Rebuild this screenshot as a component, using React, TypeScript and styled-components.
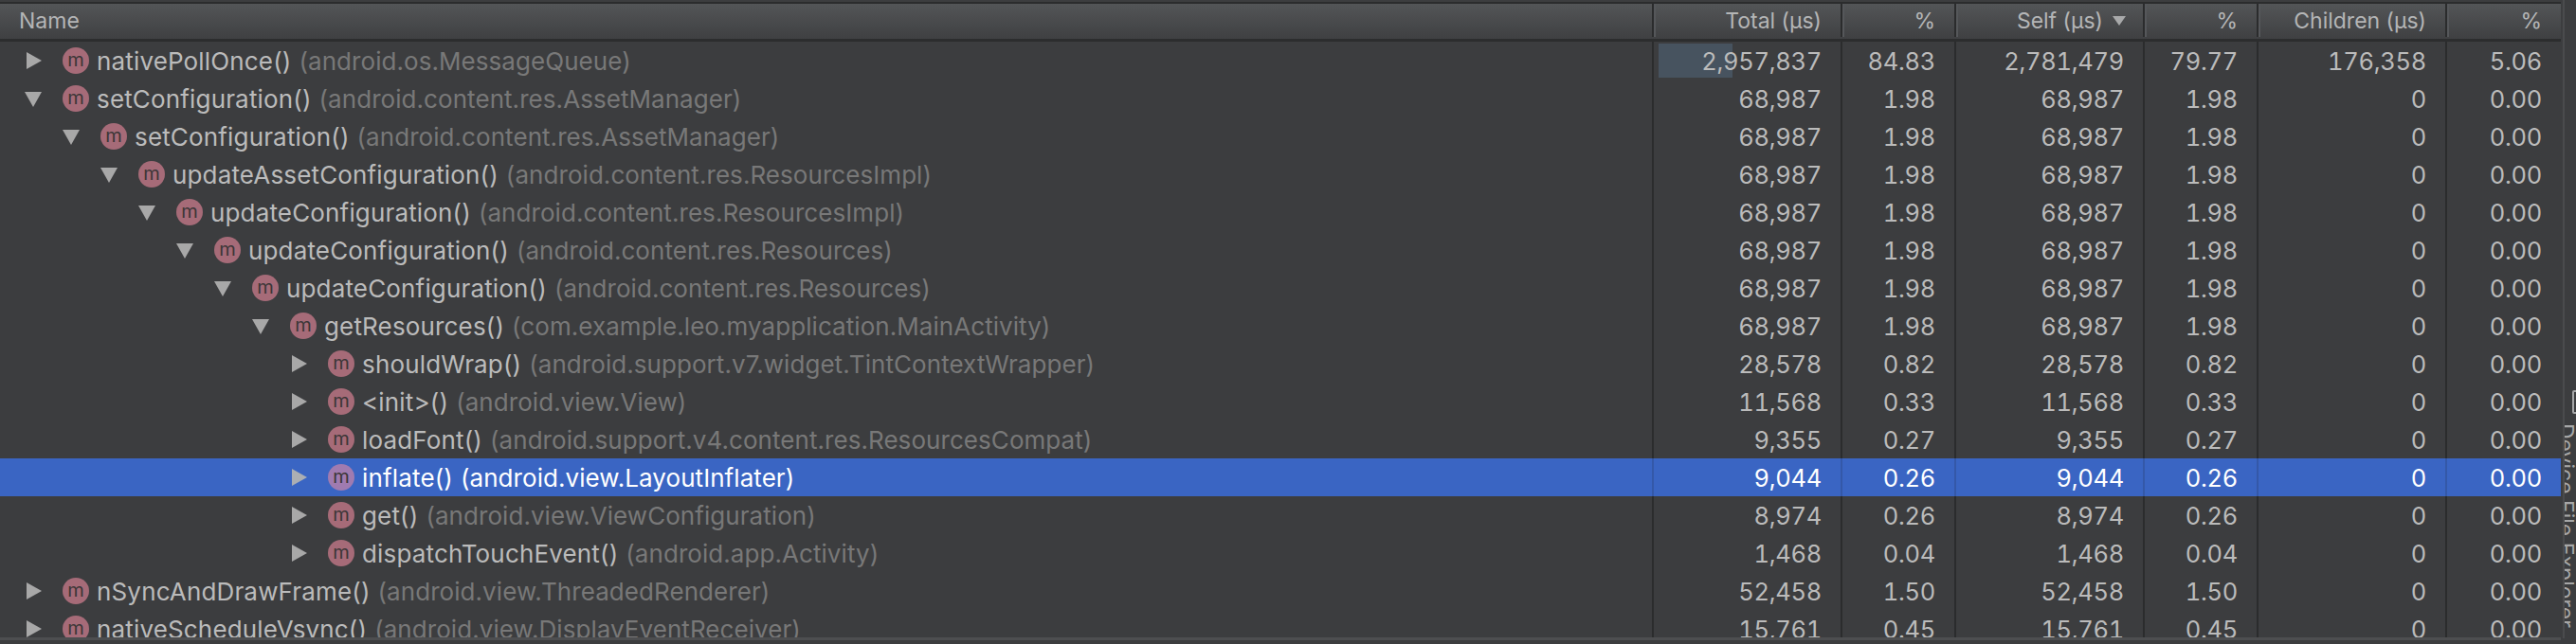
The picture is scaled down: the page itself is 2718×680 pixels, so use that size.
import React from "react";
import styled, { createGlobalStyle } from "styled-components";

const COLUMNS = "1743px 199px 120px 199px 120px 199px 122px";

const Global = createGlobalStyle`
  html, body { margin: 0; padding: 0; background: #3c3d3f; }
`;

const Frame = styled.div`
  width: 2718px;
  height: 680px;
  display: flex;
  overflow: hidden;
  background: #3c3d3f;
  font-family: Inter, "Liberation Sans", sans-serif;
  font-size: 26px;
  color: #bbbbbb;
`;

const Main = styled.div`
  width: 2702px;
  display: flex;
  flex-direction: column;
  height: 680px;
`;

const Header = styled.div`
  display: grid;
  grid-template-columns: ${COLUMNS};
  height: 35px;
  flex: none;
  margin-top: 2px;
  border-top: 2px solid #2b2c2d;
  border-bottom: 3px solid #2c2d2e;
  padding-bottom: 2px;
  font-size: 23px;
  background: linear-gradient(#535557, #3f4042);
`;

const HeaderCell = styled.div<{ $first?: boolean }>`
  display: flex;
  align-items: center;
  justify-content: ${(p) => (p.$first ? "flex-start" : "flex-end")};
  padding: ${(p) => (p.$first ? "0 0 0 20px" : "0 20px 0 0")};
  border-left: ${(p) => (p.$first ? "none" : "2px solid #2b2c2d")};
  box-shadow: ${(p) => (p.$first ? "none" : "inset 2px 0 0 #55575a")};
  color: #b4b5b6;
  white-space: nowrap;
`;

const SortArrow = styled.svg`
  width: 14px;
  height: 10px;
  margin-left: 10px;
  margin-right: -2px;
`;

const Body = styled.div`
  flex: 1;
  min-height: 0;
  overflow: hidden;
`;

const Row = styled.div<{ $selected?: boolean }>`
  display: grid;
  grid-template-columns: ${COLUMNS};
  height: 40px;
  background: ${(p) => (p.$selected ? "#3a65c3" : "transparent")};
  color: ${(p) => (p.$selected ? "#ffffff" : "#bbbbbb")};
`;

const NameCell = styled.div<{ $depth: number }>`
  display: flex;
  align-items: center;
  padding-left: ${(p) => 26 + p.$depth * 40}px;
  white-space: nowrap;
  letter-spacing: 0.16px;
`;

const Arrow = styled.svg`
  width: 18px;
  height: 18px;
  flex: none;
  margin-right: 22px;
`;

const MethodIcon = styled.span<{ $selected?: boolean }>`
  width: 28px;
  height: 28px;
  flex: none;
  margin-right: 8px;
  border-radius: 50%;
  display: flex;
  align-items: center;
  justify-content: center;
  background: ${(p) => (p.$selected ? "#a07bb0" : "#a66b78")};
  color: #3b3637;
  font-size: 20px;
  line-height: 24px;
  padding-bottom: 2px;
  box-sizing: border-box;
`;

const Package = styled.span<{ $selected?: boolean }>`
  margin-left: 8px;
  letter-spacing: 0.06px;
  color: ${(p) => (p.$selected ? "#ffffff" : "#787878")};
`;

const NumCell = styled.div<{ $selected?: boolean }>`
  position: relative;
  display: flex;
  align-items: center;
  justify-content: flex-end;
  padding-right: 20px;
  border-left: 2px solid ${(p) => (p.$selected ? "#3458a8" : "#2b2c2d")};
  font-size: 25.5px;
  font-variant-numeric: tabular-nums;
  letter-spacing: -0.3px;
`;

const Bar = styled.div`
  position: absolute;
  left: 5px;
  top: 2px;
  bottom: 2px;
  background: #47535f;
`;

const CellText = styled.span`
  position: relative;
`;

const Footer = styled.div`
  flex: none;
  height: 7px;
  border-top: 3px solid #4d4e50;
  box-sizing: border-box;
  background: #3c3d3f;
`;

const Gutter = styled.div`
  width: 16px;
  flex: none;
  box-sizing: border-box;
  border-left: 2px solid #4a4b4d;
  margin-left: 2px;
  height: 674px;
  padding: 412px 0 0 8px;
  display: flex;
  flex-direction: column;
  overflow: hidden;
`;

const GutterIcon = styled.div`
  width: 16px;
  height: 25px;
  flex: none;
  box-sizing: border-box;
  border: 2px solid #a6a7a8;
  border-radius: 2px;
`;

const GutterLabel = styled.div`
  writing-mode: vertical-rl;
  margin: 10px 0 0 -3px;
  font-size: 23px;
  line-height: 26px;
  height: 210px;
  color: #a6a7a8;
  white-space: nowrap;
`;

type Data = {
  name: string;
  pkg: string;
  depth: number;
  open?: boolean;
  vals: [string, string, string, string, string, string];
  selected?: boolean;
  bar?: number;
};

const same = (a: string, b: string): Data["vals"] => [a, b, a, b, "0", "0.00"];

const rows: Data[] = [
  { name: "nativePollOnce()", pkg: "(android.os.MessageQueue)", depth: 0, vals: ["2,957,837", "84.83", "2,781,479", "79.77", "176,358", "5.06"], bar: 78 },
  { name: "setConfiguration()", pkg: "(android.content.res.AssetManager)", depth: 0, open: true, vals: same("68,987", "1.98") },
  { name: "setConfiguration()", pkg: "(android.content.res.AssetManager)", depth: 1, open: true, vals: same("68,987", "1.98") },
  { name: "updateAssetConfiguration()", pkg: "(android.content.res.ResourcesImpl)", depth: 2, open: true, vals: same("68,987", "1.98") },
  { name: "updateConfiguration()", pkg: "(android.content.res.ResourcesImpl)", depth: 3, open: true, vals: same("68,987", "1.98") },
  { name: "updateConfiguration()", pkg: "(android.content.res.Resources)", depth: 4, open: true, vals: same("68,987", "1.98") },
  { name: "updateConfiguration()", pkg: "(android.content.res.Resources)", depth: 5, open: true, vals: same("68,987", "1.98") },
  { name: "getResources()", pkg: "(com.example.leo.myapplication.MainActivity)", depth: 6, open: true, vals: same("68,987", "1.98") },
  { name: "shouldWrap()", pkg: "(android.support.v7.widget.TintContextWrapper)", depth: 7, vals: same("28,578", "0.82") },
  { name: "<init>()", pkg: "(android.view.View)", depth: 7, vals: same("11,568", "0.33") },
  { name: "loadFont()", pkg: "(android.support.v4.content.res.ResourcesCompat)", depth: 7, vals: same("9,355", "0.27") },
  { name: "inflate()", pkg: "(android.view.LayoutInflater)", depth: 7, vals: same("9,044", "0.26"), selected: true },
  { name: "get()", pkg: "(android.view.ViewConfiguration)", depth: 7, vals: same("8,974", "0.26") },
  { name: "dispatchTouchEvent()", pkg: "(android.app.Activity)", depth: 7, vals: same("1,468", "0.04") },
  { name: "nSyncAndDrawFrame()", pkg: "(android.view.ThreadedRenderer)", depth: 0, vals: same("52,458", "1.50") },
  { name: "nativeScheduleVsync()", pkg: "(android.view.DisplayEventReceiver)", depth: 0, vals: same("15,761", "0.45") },
];

const Toggle = ({ open, selected }: { open?: boolean; selected?: boolean }) => (
  <Arrow viewBox="0 0 18 18">
    <polygon
      points={open ? "0,2 18,2 9,18" : "2,0 18,9 2,18"}
      fill={selected ? "#abaeb3" : "#a8a8a8"}
    />
  </Arrow>
);

export default function App() {
  return (
    <Frame>
      <Global />
      <Main>
        <Header>
          <HeaderCell $first>Name</HeaderCell>
          <HeaderCell>Total (µs)</HeaderCell>
          <HeaderCell>%</HeaderCell>
          <HeaderCell>
            Self (µs)
            <SortArrow viewBox="0 0 14 10">
              <polygon points="0,0 14,0 7,10" fill="#a8a9aa" />
            </SortArrow>
          </HeaderCell>
          <HeaderCell>%</HeaderCell>
          <HeaderCell>Children (µs)</HeaderCell>
          <HeaderCell>%</HeaderCell>
        </Header>
        <Body>
          {rows.map((r, i) => (
            <Row key={i} $selected={r.selected}>
              <NameCell $depth={r.depth}>
                <Toggle open={r.open} selected={r.selected} />
                <MethodIcon $selected={r.selected}>m</MethodIcon>
                {r.name}
                <Package $selected={r.selected}>{r.pkg}</Package>
              </NameCell>
              {r.vals.map((v, j) => (
                <NumCell key={j} $selected={r.selected}>
                  {j === 0 && r.bar ? <Bar style={{ width: r.bar }} /> : null}
                  <CellText>{v}</CellText>
                </NumCell>
              ))}
            </Row>
          ))}
        </Body>
        <Footer />
      </Main>
      <Gutter>
        <GutterIcon />
        <GutterLabel>Device File Explorer</GutterLabel>
      </Gutter>
    </Frame>
  );
}
